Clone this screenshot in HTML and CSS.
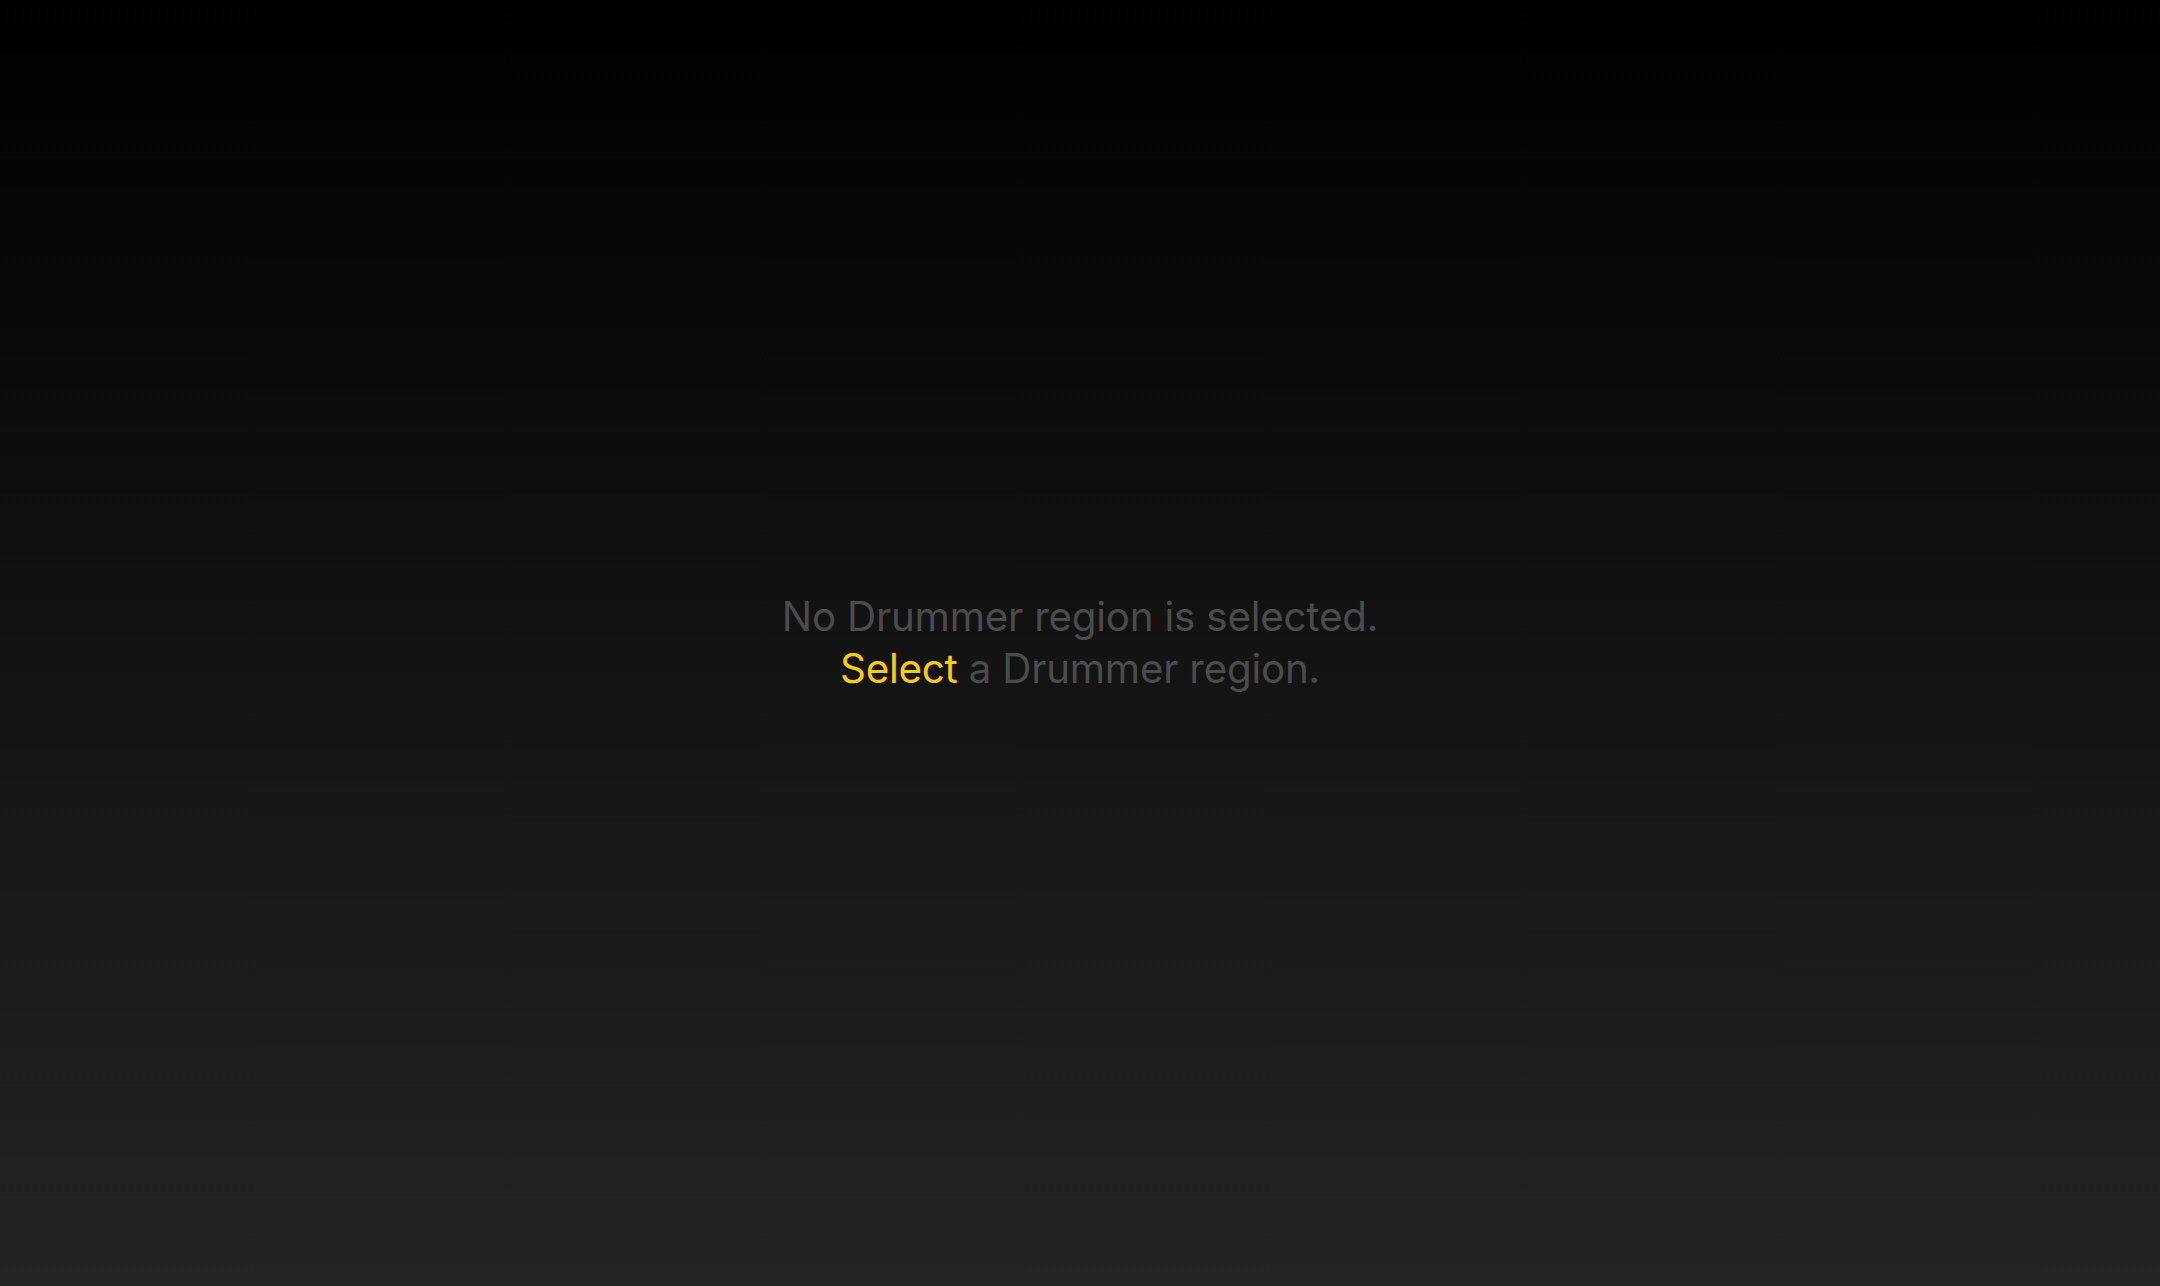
FILE: index.html
```html
<!DOCTYPE html>
<html>
<head>
<meta charset="utf-8">
<link rel="stylesheet" href="styles.css">
</head>
<body>
<main class="screen">
  <div class="message">
    <p class="line">No Drummer region is selected.</p>
    <p class="line"><span class="accent">Select</span> a Drummer region.</p>
  </div>
</main>
</body>
</html>
```
FILE: styles.css
```css
html, body {
  margin: 0;
  padding: 0;
  height: 100%;
}
body {
  background: #000;
}
.screen {
  width: 100%;
  height: 100vh;
  background: linear-gradient(to bottom, #000000 0%, #111111 45%, #242424 100%);
  display: flex;
  align-items: center;
  justify-content: center;
}
.message {
  text-align: center;
  font-family: Inter, "Noto Sans", sans-serif;
  font-size: 40.3px;
  line-height: 52px;
  color: #4b4b4b;
  letter-spacing: -0.2px;
}
.line {
  margin: 0;
}
.accent {
  color: #ffcc00;
}
```
